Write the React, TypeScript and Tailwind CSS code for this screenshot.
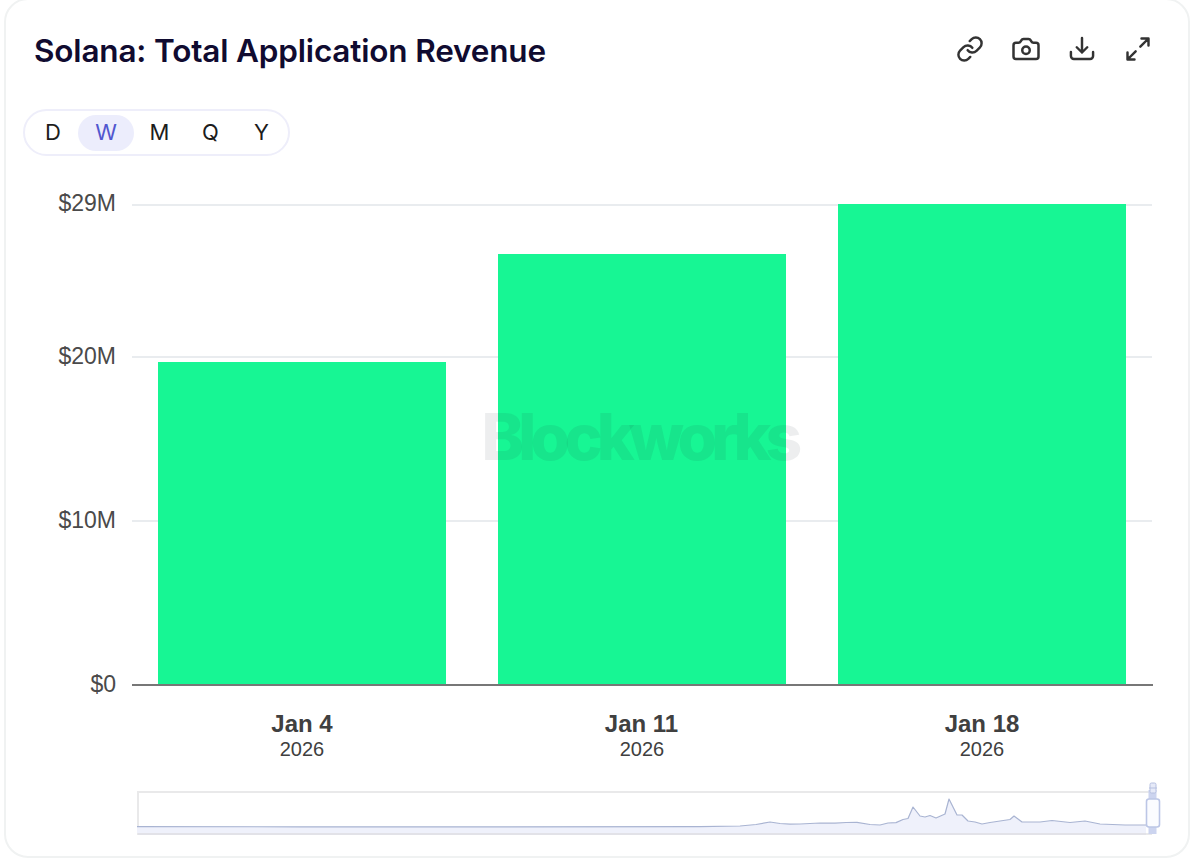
import React from "react";
import { Link, Camera } from "lucide-react";

const series =
  "137,826.6 300,826.8 500,826.8 700,826.6 740,826 756,824.5 770,822 780,823.5 790,824.2 800,824 820,823 835,823.2 846,822.5 857,822.4 870,824.5 880,825 888,823 896,822.6 903,819.5 908,818.5 913,807 920,816 925,817 930,815.5 936,818 945,814 949,799 957,815 962,815 968,821 975,822 982,824 990,822.5 1010,819.5 1014,816 1022,822 1040,822 1052,820.5 1070,822.5 1085,821 1100,824 1125,825 1146,825";

const ranges = ["D", "W", "M", "Q", "Y"];

function Download() {
  return (
    <svg width="28" height="28" viewBox="0 0 24 24" fill="none" stroke="#333" strokeWidth="2.1" strokeLinecap="round" strokeLinejoin="round">
      <path d="M2.5 14.5v3.5a2.5 2.5 0 0 0 2.5 2.5h14a2.5 2.5 0 0 0 2.5-2.5v-3.5" />
      <path d="M12 2.5v12.5M7.5 10.5l4.5 4.5 4.5-4.5" />
    </svg>
  );
}

function Expand() {
  return (
    <svg width="28" height="28" viewBox="0 0 24 24" fill="none" stroke="#333" strokeWidth="2.1" strokeLinecap="round" strokeLinejoin="round">
      <path d="M14 10l7-7M15 3h6v6" />
      <path d="M10 14l-7 7M3 15v6h6" />
    </svg>
  );
}

export default function App() {
  return (
    <div className="h-[860px] w-[1194px] overflow-hidden bg-white flex flex-col justify-end px-[4px] pb-[2px] font-['Inter',sans-serif]">
      <div className="h-[860px] shrink-0 rounded-[24px] border-2 border-[#f0f2f2] bg-white flex flex-col">
        <div className="flex items-center justify-between pl-[28px] pr-[36px] pt-[33px]">
          <h1 className="text-[31.5px] leading-[36px] font-semibold text-[#100b30] tracking-[-0.17px]">
            Solana: Total Application Revenue
          </h1>
          <div className="flex items-center gap-7 text-[#333] -mt-[4px]">
            <Link size={28} strokeWidth={2.1} />
            <Camera size={30} strokeWidth={2} className="-mx-[1px]" />
            <Download />
            <Expand />
          </div>
        </div>
        <div className="mt-[40px] ml-[17px] w-[267px] h-[47px] shrink-0 rounded-full border-2 border-[#eeeefa] flex items-center pl-[3px]">
          {ranges.map((r) => (
            <span
              key={r}
              className={
                r === "W"
                  ? "w-[56px] h-[36px] rounded-full bg-[#ecedfc] text-[#5157cf] text-[22px] flex items-center justify-center"
                  : r === "D"
                    ? "w-[50px] h-[36px] text-[#1c1c1c] text-[22px] flex items-center justify-center"
                    : "w-[51px] h-[36px] text-[#1c1c1c] text-[22px] flex items-center justify-center"
              }
            >
              {r}
            </span>
          ))}
        </div>
        <svg className="block -ml-[6px] mt-[19px] shrink-0" width="1194" height="681" viewBox="0 175 1194 681">
          <g stroke="#e9ecef" strokeWidth="2">
            <line x1="132" x2="1152" y1="205" y2="205" />
            <line x1="132" x2="1152" y1="357" y2="357" />
            <line x1="132" x2="1152" y1="521" y2="521" />
          </g>
          <g fontFamily="'Liberation Sans', Arial, sans-serif" fontSize="23" fill="#4a4a4a" textAnchor="end">
            <text x="116" y="211">$29M</text>
            <text x="116" y="364">$20M</text>
            <text x="116" y="528">$10M</text>
            <text x="116" y="692">$0</text>
          </g>
          <g fill="#17f694">
            <rect x="158" y="362" width="288" height="323" />
            <rect x="498" y="254" width="288" height="431" />
            <rect x="838" y="204" width="288" height="481" />
          </g>
          <text x="639" y="460" textAnchor="middle" fontFamily="Inter, sans-serif" fontWeight="800" fontSize="64" letterSpacing="-5.8" fill="#1a2035" fillOpacity="0.08">
            Blockworks
          </text>
          <line x1="132" x2="1153" y1="685" y2="685" stroke="#777" strokeWidth="2" />
          <g fontFamily="'Liberation Sans', Arial, sans-serif" fill="#404040" textAnchor="middle">
            <g fontSize="24" fontWeight="700">
              <text x="302" y="732">Jan 4</text>
              <text x="641.5" y="732">Jan 11</text>
              <text x="982" y="732">Jan 18</text>
            </g>
            <g fontSize="20">
              <text x="302" y="756">2026</text>
              <text x="642" y="756">2026</text>
              <text x="982" y="756">2026</text>
            </g>
          </g>
          <rect x="138" y="792" width="1013" height="42" fill="none" stroke="#e9e9ea" strokeWidth="2" />
          <polygon points={`${series} 1146,833 137,833`} fill="#eff1fb" />
          <polyline points={series} fill="none" stroke="#a9b4d2" strokeWidth="1.2" strokeLinejoin="round" />
          <line x1="138" x2="1146" y1="834" y2="834" stroke="#e2e2e8" strokeWidth="2" />
          <rect x="1148.5" y="790" width="8" height="44" fill="#ccd4ef" />
          <rect x="1150" y="783" width="6" height="10" rx="1.5" fill="#e6eaf8" stroke="#b6c0e0" strokeWidth="1" />
          <line x1="1149" x2="1157" y1="788" y2="788" stroke="#b6c0e0" strokeWidth="1" />
          <rect x="1146.5" y="799" width="13" height="28" rx="2.5" fill="#fbfcff" stroke="#bcc6e6" strokeWidth="1.6" />
        </svg>
      </div>
    </div>
  );
}
